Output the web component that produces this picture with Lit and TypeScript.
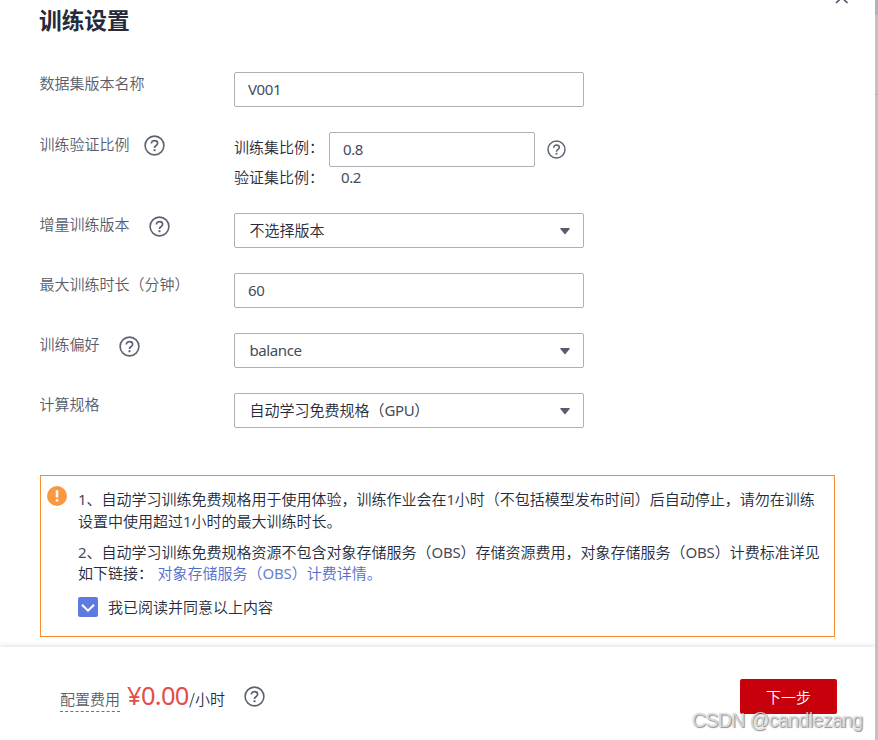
import { LitElement, html, css, svg } from "lit";
import { customElement, property } from "lit/decorators.js";

@customElement("help-icon")
class HelpIcon extends LitElement {
  @property({ type: Number }) size = 21;
  static styles = css`
    :host { display: block; flex: none; line-height: 0; }
    svg { display: block; fill: none; stroke: #5c6271; }
  `;
  render() {
    return html`<svg width=${this.size} height=${this.size} viewBox="0 0 21 21">
      ${svg`<circle cx="10.5" cy="10.5" r="9.4" stroke-width="1.6"/>
      <path d="M7.400 8.500C7.400 6.600 8.700 5.600 10.500 5.600s3.100 1 3.100 2.600c0 1.300-.8 1.900-1.700 2.500-1 .7-1.400 1.200-1.400 2.300" stroke-width="1.700"/>
      <path d="M10.500 14.200v2" stroke-width="2"/>`}
    </svg>`;
  }
}

@customElement("select-box")
class SelectBox extends LitElement {
  static styles = css`
    :host { display: flex; align-items: center; justify-content: space-between; box-sizing: border-box;
      width: 350px; height: 35px; border: 1px solid #adb0b8; border-radius: 2px; padding: 0 13px 0 14.500px;
      color: #252b3a; background: #fff; }
    span { padding-bottom: 2px; }
    svg { display: block; fill: #575d6c; margin-top: 1px; }
  `;
  render() {
    return html`<span><slot></slot></span>
      <svg width="10" height="7" viewBox="0 0 10 7"><path d="M.8 0h8.400q.9.200.4.900L5.500 6.100q-.5.500-1 0L.4.900Q-.1.200.8 0z"/></svg>`;
  }
}

@customElement("app-root")
class AppRoot extends LitElement {
  static styles = css`
    :host { display: block; position: relative; box-sizing: border-box; width: 878px; height: 740px; overflow: hidden;
      background: #fff; color: #252b3a; font: 15px/22px "Noto Sans CJK SC", sans-serif; font-weight: 350; white-space: nowrap; }
    .lat { font-family: "Noto Sans", sans-serif; font-weight: 400; font-size: 15px; letter-spacing: -0.400px; color: #454b5a; }
    .shell { display: flex; height: 740px; }
    .panel { width: 875px; display: flex; flex-direction: column; }
    .rail { width: 3px; background: #c2c2c3; display: flex; flex-direction: column; }
    .rail-top { height: 15px; background: #b2b3b8; }
    .rail-mark { height: 1px; margin-top: 79px; background: #adadaf; }
    .close { position: absolute; left: 835px; top: -9px; stroke: #575d6c; stroke-width: 1.7; fill: none; }
    .body { height: 647px; box-sizing: border-box; padding: 5px 40px 0; }
    h1 { margin: 0 0 0 -1px; font-size: 22.700px; line-height: 30px; height: 67px; font-weight: 700; letter-spacing: 0; }
    .row { display: flex; height: 60px; }
    .row.tall { height: 81px; }
    .label { width: 194.500px; height: 22px; margin-left: -0.500px; display: flex; align-items: center; color: #575d6c; }
    .tall .label { height: 24px; }
    .gap-s { margin: 2px 0 0 14.500px; }
    .gap { margin: 5px 0 0 19.500px; }
    .input { box-sizing: border-box; width: 350px; height: 35px; border: 1px solid #adb0b8; border-radius: 2px;
      padding: 0 13px 2px; display: flex; align-items: center; }
    .ratios { display: flex; flex-direction: column; }
    .ratio { display: flex; height: 35px; }
    .caption { width: 95px; line-height: 29px; }
    .ratio .input { width: 206px; }
    .ratio help-icon { margin: 8px 0 0 12px; }
    .second .caption { width: 107px; line-height: 20px; }
    .second { line-height: 20px; }
    .notice { box-sizing: border-box; width: 795px; height: 162px; border: 1px solid #fa8b2e; margin-top: 22px;
      padding: 10px 0 0 6px; display: flex; }
    .mark { flex: none; margin-right: 11px; }
    .notice .lat { letter-spacing: -0.200px; }
    .text p { margin: 2px 0 9px; }
    .line { display: block; height: 22px; }
    .text p + p { margin: 0; }
    .text p + p .line { height: 21px; }
    .link { color: #526ecc; margin-left: 4.500px; }
    .link .lat { color: #6880d2; }
    .agree { display: flex; align-items: center; gap: 10px; margin-top: 13px; height: 22px; }
    .agree span { padding-bottom: 1px; }
    .footer { flex: 1; box-sizing: border-box; display: flex; padding: 32px 38px 0 60px; background: #fff;
      box-shadow: 0 -1px 5px rgba(0, 0, 0, .13); }
    .fee { line-height: 40px; color: #575d6c; border-bottom: 1px dashed #6c7280; height: 32px; width: 60px; }
    .price { margin-left: 7px; font: 400 25.500px/33px "Noto Sans", sans-serif; letter-spacing: -0.700px; color: #e1504a; width: 63px; }
    .unit { line-height: 40px; margin-left: -1px; }
    .footer help-icon { margin: 7px 0 0 19.500px; }
    .next { margin-left: auto; width: 97px; height: 35px; border: 0; padding: 0; border-radius: 2px; background: #c7000b;
      color: #fff; font: 350 15px/35px "Noto Sans CJK SC", sans-serif; }
    .watermark { position: absolute; left: 692px; top: 708px; font: 19.500px/24px "Liberation Sans", sans-serif; letter-spacing: -0.600px;
      color: rgba(255, 255, 255, .7); text-shadow: 1px 1px 1px rgba(0, 0, 0, .42), 0 0 1px rgba(0, 0, 0, .35); }
  `;
  // Latin letters and digits run in their own face beside the Chinese text.
  private mix(text: string) {
    return text.split(/([A-Za-z0-9.]+)/).map((part, i) => (i % 2 ? html`<span class="lat">${part}</span>` : part));
  }
  render() {
    const m = (t: string) => this.mix(t);
    return html`
      <div class="shell">
        <div class="panel">
          <div class="body">
            <h1>训练设置</h1>
            <div class="row"><div class="label">数据集版本名称</div><div class="input">${m("V001")}</div></div>
            <div class="row tall">
              <div class="label">训练验证比例<help-icon class="gap-s"></help-icon></div>
              <div class="ratios">
                <div class="ratio"><span class="caption">训练集比例：</span><div class="input">${m("0.8")}</div><help-icon .size=${19}></help-icon></div>
                <div class="ratio second"><span class="caption">验证集比例：</span>${m("0.2")}</div>
              </div>
            </div>
            <div class="row"><div class="label">增量训练版本<help-icon class="gap"></help-icon></div><select-box>不选择版本</select-box></div>
            <div class="row"><div class="label">最大训练时长（分钟）</div><div class="input">${m("60")}</div></div>
            <div class="row"><div class="label">训练偏好<help-icon class="gap"></help-icon></div><select-box>${m("balance")}</select-box></div>
            <div class="row"><div class="label">计算规格</div><select-box>${m("自动学习免费规格（GPU）")}</select-box></div>
            <div class="notice">
              <svg class="mark" width="20" height="20" viewBox="0 0 20 20"><circle cx="10" cy="10" r="10" fill="#fa9841"/><path d="M10 4.300v7.200M10 13.300v2.300" stroke="#fff" stroke-width="2.500"/></svg>
              <div class="text">
                <p><span class="line">${m("1、自动学习训练免费规格用于使用体验，训练作业会在1小时（不包括模型发布时间）后自动停止，请勿在训练")}</span>
                <span class="line">${m("设置中使用超过1小时的最大训练时长。")}</span></p>
                <p><span class="line">${m("2、自动学习训练免费规格资源不包含对象存储服务（OBS）存储资源费用，对象存储服务（OBS）计费标准详见")}</span>
                <span class="line">如下链接：<span class="link">${m("对象存储服务（OBS）计费详情。")}</span></span></p>
                <div class="agree"><svg width="20" height="20" viewBox="0 0 20 20"><rect width="20" height="20" rx="2" fill="#5e7ce0"/><path d="M4 7.700l6 6 6-6" fill="none" stroke="#fff" stroke-width="2"/></svg><span>我已阅读并同意以上内容</span></div>
              </div>
            </div>
          </div>
          <div class="footer">
            <span class="fee">配置费用</span><span class="price">¥0.00</span><span class="unit">/小时</span>
            <help-icon></help-icon>
            <button class="next">下一步</button>
          </div>
        </div>
        <div class="rail"><div class="rail-top"></div><div class="rail-mark"></div></div>
      </div>
      <svg class="close" width="14" height="14" viewBox="0 0 14 14"><path d="M1 1l11.500 11M12.500 1L1 12"/></svg>
      <div class="watermark">CSDN @candlezang</div>`;
  }
}
